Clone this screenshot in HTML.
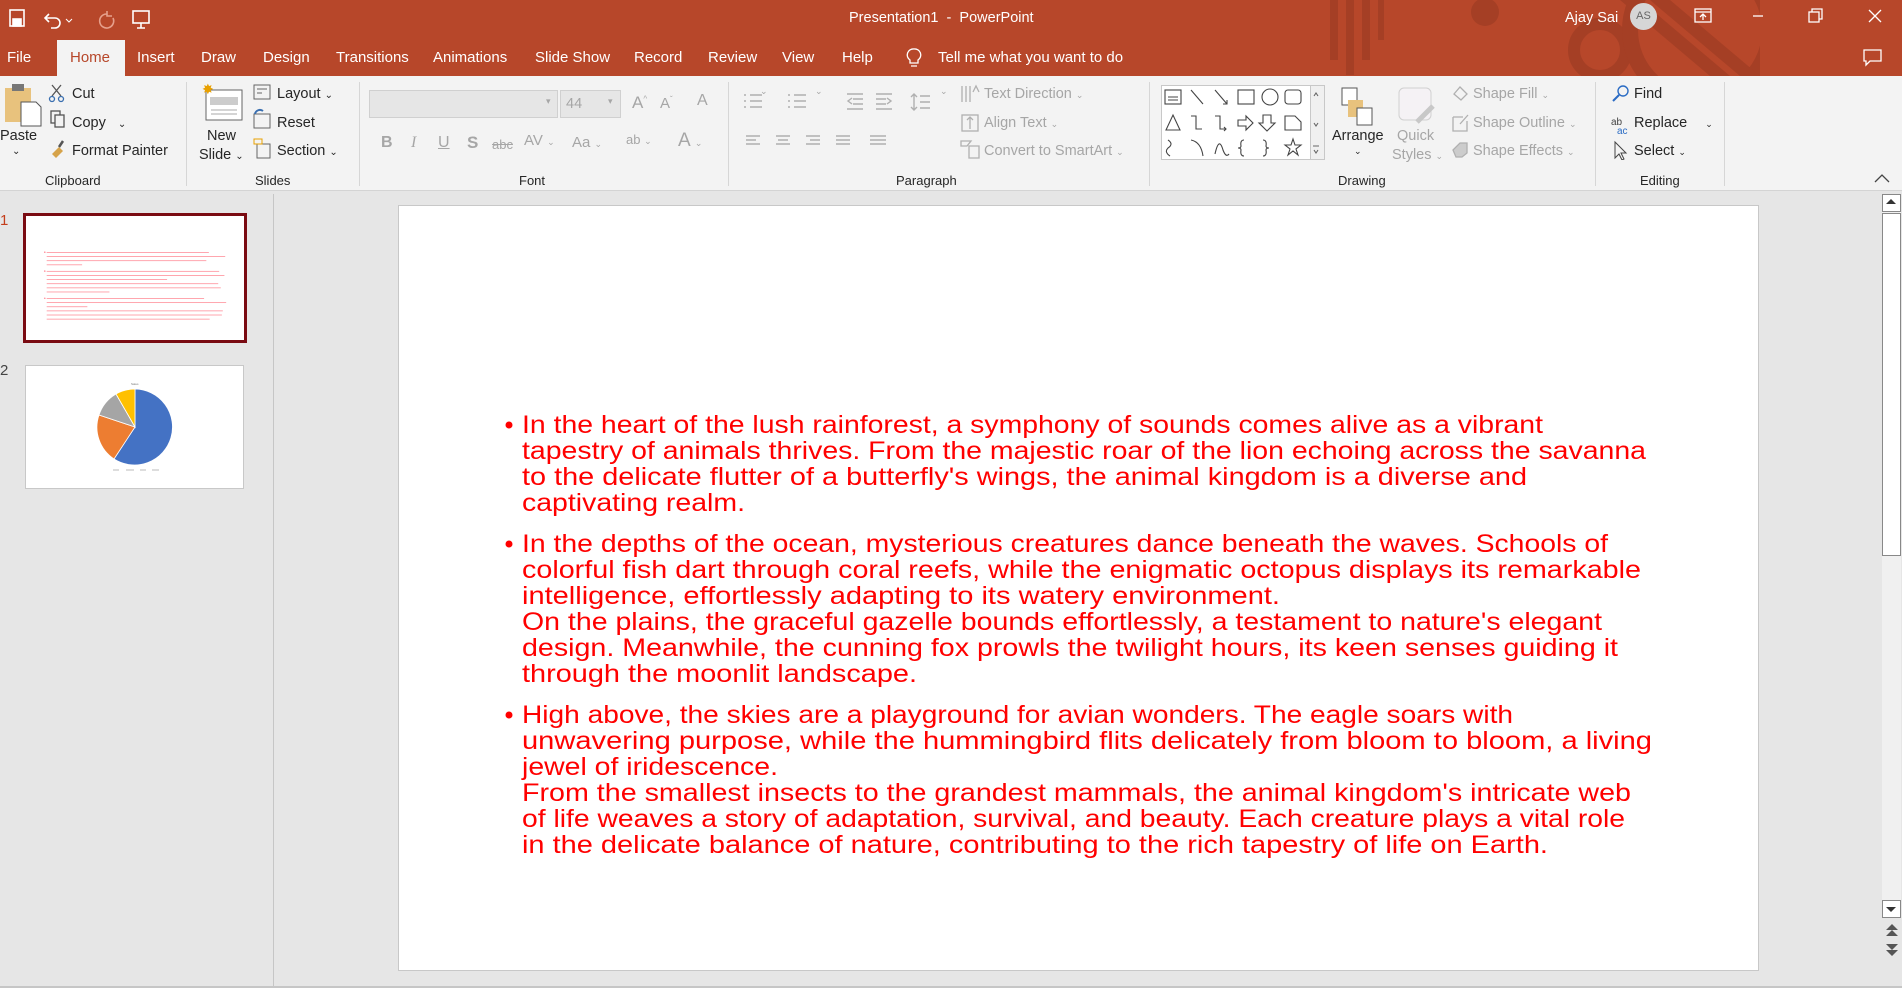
<!DOCTYPE html>
<html><head><meta charset="utf-8">
<style>
*{margin:0;padding:0;box-sizing:border-box}
body{width:1902px;height:988px;overflow:hidden;background:#e6e6e6;font-family:"Liberation Sans",sans-serif;position:relative}
.a{position:absolute;white-space:nowrap}
#title{left:0;top:0;width:1902px;height:76px;background:#b7472a;overflow:hidden}
.w{color:#fff;font-size:15px}
.tab{top:49px;color:#fff;font-size:15px}
#rib{left:0;top:76px;width:1902px;height:115px;background:#f3f3f3;border-bottom:1px solid #d4d4d4}
.t{font-size:14.5px;color:#262626}
.d{font-size:14.5px;color:#a6a6a6}
.lab{top:173px;font-size:13px;color:#262626}
.sep{top:82px;width:1px;height:104px;background:#d6d6d6}
.ic{position:absolute}
</style></head><body>
<div class="a" id="title">
  <svg class="a" style="left:1290px;top:0" width="470" height="76">
    <g fill="#a53f25">
      <rect x="40" y="0" width="8" height="60"/><rect x="56" y="0" width="8" height="75"/><rect x="72" y="0" width="8" height="60"/><rect x="88" y="0" width="6" height="40"/>
      <circle cx="195" cy="12" r="14"/>
      <circle cx="310" cy="50" r="26" fill="none" stroke="#a53f25" stroke-width="12"/>
      <circle cx="410" cy="30" r="70" fill="none" stroke="#a53f25" stroke-width="16"/>
      <path d="M330 0 L420 76 L440 76 L350 0Z"/><path d="M360 0 L450 76 L470 76 L380 0Z"/>
    </g>
  </svg>
  <svg class="a" style="left:9px;top:8px" width="160" height="22" fill="none" stroke="#fff" stroke-width="1.6">
    <rect x="1" y="2" width="14" height="16"/><rect x="4" y="11" width="8" height="7" fill="#fff"/>
    <path d="M40 6 L36 10 L40 14 M36 10 H46 A5 5 0 0 1 46 20 H42"/>
    <path d="M57 11 l3 3 l3 -3" stroke-width="1"/>
    <path d="M98 6 A7 7 0 1 0 104 10 M98 3 V8 H103" stroke="#e6a08c"/>
    <rect x="124" y="3" width="16" height="12"/><path d="M132 15 V20 M128 20 H136"/>
    <path d="M160 12 h6 M161 15 l2 2 l2 -2" stroke-width="1"/>
  </svg>
  <div class="a w" style="left:849px;top:10px;font-size:14.5px">Presentation1&nbsp; - &nbsp;PowerPoint</div>
  <div class="a w" style="left:1565px;top:10px;font-size:14.5px">Ajay Sai</div>
  <div class="a" style="left:1630px;top:3px;width:27px;height:27px;border-radius:50%;background:#d6d6d6;color:#666;font-size:11px;text-align:center;line-height:27px">AS</div>
  <svg class="a" style="left:1692px;top:6px" width="200" height="22" fill="none" stroke="#fff" stroke-width="1.3">
    <rect x="3" y="3" width="16" height="13"/><path d="M3 6 H19 M11 14 V8 M8 11 l3 -3 l3 3"/>
    <path d="M61 10 H71"/>
    <rect x="117" y="6" width="10" height="10"/><path d="M120 6 V3 H130 V13 H127"/>
    <path d="M177 4 L189 16 M189 4 L177 16"/>
  </svg>
  <div class="a tab" style="left:7px">File</div>
  <div class="a" style="left:57px;top:40px;width:68px;height:36px;background:#f3f3f3"></div>
  <div class="a tab" style="left:70px;color:#b7472a">Home</div>
  <div class="a tab" style="left:137px">Insert</div>
  <div class="a tab" style="left:201px">Draw</div>
  <div class="a tab" style="left:263px">Design</div>
  <div class="a tab" style="left:336px">Transitions</div>
  <div class="a tab" style="left:433px">Animations</div>
  <div class="a tab" style="left:535px">Slide Show</div>
  <div class="a tab" style="left:634px">Record</div>
  <div class="a tab" style="left:708px">Review</div>
  <div class="a tab" style="left:782px">View</div>
  <div class="a tab" style="left:842px">Help</div>
  <svg class="a" style="left:904px;top:47px" width="20" height="22" fill="none" stroke="#fff" stroke-width="1.3"><path d="M10 2 A6 6 0 0 1 14 13 V16 H6 V13 A6 6 0 0 1 10 2Z M7 19 H13"/></svg>
  <div class="a tab" style="left:938px">Tell me what you want to do</div>
  <svg class="a" style="left:1862px;top:48px" width="22" height="20" fill="none" stroke="#fff" stroke-width="1.3"><path d="M2 2 H19 V13 H8 L4 17 V13 H2Z"/></svg>
</div>

<div class="a" id="rib">
  <svg class="ic" style="left:3px;top:6px" width="40" height="46"><rect x="2" y="6" width="26" height="34" fill="#e8c27d"/><rect x="9" y="2" width="12" height="7" fill="#777"/><path d="M18 20 H33 L38 25 V44 H18Z" fill="#fff" stroke="#555"/></svg>
  <div class="a t" style="left:0;top:52px">Paste</div>
  <div class="a t" style="left:12px;top:70px;font-size:10px">&#8964;</div>
  <svg class="ic" style="left:48px;top:7px" width="18" height="80" fill="none" stroke="#3a6fb0" stroke-width="1.3"><path d="M4 2 L13 13 M13 2 L4 13" stroke="#555"/><circle cx="4" cy="16" r="2.5"/><circle cx="13" cy="16" r="2.5"/><rect x="3" y="28" width="9" height="12" stroke="#555"/><rect x="7" y="32" width="9" height="12" fill="#f3f3f3" stroke="#555"/><path d="M4 71 L11 64 L15 68 L8 75Z" fill="#d6a34a" stroke="none"/><path d="M11 64 L15 58" stroke="#555" stroke-width="2.5"/></svg>
  <div class="a t" style="left:72px;top:10px">Cut</div>
  <div class="a t" style="left:72px;top:39px">Copy <span style="font-size:10px;margin-left:8px">&#8964;</span></div>
  <div class="a t" style="left:72px;top:67px">Format Painter</div>
  <div class="a lab" style="left:45px;top:97px">Clipboard</div>
  <div class="sep a" style="left:186px;top:6px"></div>
  <svg class="ic" style="left:201px;top:6px" width="44" height="40"><rect x="5" y="8" width="36" height="30" fill="#fff" stroke="#666"/><rect x="9" y="15" width="28" height="8" fill="#ccc"/><path d="M10 28 H36 M10 32 H36" stroke="#aaa"/><text x="1" y="12" font-size="14" fill="#e8a000">✸</text></svg>
  <div class="a t" style="left:207px;top:52px">New</div>
  <div class="a t" style="left:199px;top:71px">Slide <span style="font-size:10px">&#8964;</span></div>
  <svg class="ic" style="left:253px;top:8px" width="20" height="76" fill="none" stroke="#666"><rect x="1" y="1" width="16" height="14"/><path d="M4 5 H14 M4 9 H9"/><rect x="1" y="30" width="16" height="14"/><path d="M2 30 A5 5 0 0 1 10 27" stroke="#3a6fb0" stroke-width="2"/><rect x="4" y="60" width="13" height="14"/><rect x="1" y="55" width="8" height="5" stroke="#e8a000"/></svg>
  <div class="a t" style="left:277px;top:10px">Layout <span style="font-size:10px">&#8964;</span></div>
  <div class="a t" style="left:277px;top:39px">Reset</div>
  <div class="a t" style="left:277px;top:67px">Section <span style="font-size:10px">&#8964;</span></div>
  <div class="a lab" style="left:255px;top:97px">Slides</div>
  <div class="sep a" style="left:359px;top:6px"></div>
  <div class="a" style="left:369px;top:14px;width:189px;height:28px;background:#e6e6e6;border:1px solid #d0d0d0"></div>
  <div class="a" style="left:560px;top:14px;width:61px;height:28px;background:#e6e6e6;border:1px solid #d0d0d0"></div>
  <div class="a d" style="left:566px;top:20px">44</div>
  <div class="a d" style="left:546px;top:20px;font-size:9px">▾</div><div class="a d" style="left:608px;top:20px;font-size:9px">▾</div>
  <div class="a d" style="left:632px;top:17px;font-size:17px">A<sup style="font-size:8px">^</sup></div>
  <div class="a d" style="left:660px;top:19px;font-size:15px">A<sup style="font-size:8px">ˇ</sup></div>
  <div class="a d" style="left:697px;top:16px;font-size:16px">A</div>
  <div class="a d" style="left:381px;top:58px;font-weight:bold;font-size:16px">B</div>
  <div class="a d" style="left:411px;top:58px;font-style:italic;font-size:16px;font-family:'Liberation Serif',serif">I</div>
  <div class="a d" style="left:438px;top:58px;text-decoration:underline;font-size:16px">U</div>
  <div class="a d" style="left:467px;top:57px;font-weight:bold;font-size:17px">S</div>
  <div class="a d" style="left:492px;top:61px;text-decoration:line-through;font-size:13px">abc</div>
  <div class="a d" style="left:524px;top:56px;font-size:15px">AV <span style="font-size:9px">⌄</span></div>
  <div class="a d" style="left:572px;top:58px;font-size:15px">Aa <span style="font-size:9px">⌄</span></div>
  <div class="a d" style="left:626px;top:56px;font-size:13px">ab <span style="font-size:9px">⌄</span></div>
  <div class="a d" style="left:678px;top:54px;font-size:19px">A <span style="font-size:9px">⌄</span></div>
  <div class="a lab" style="left:519px;top:97px">Font</div>
  <div class="sep a" style="left:728px;top:6px"></div>
  <svg class="ic" style="left:740px;top:16px" width="210" height="60" stroke="#b0b0b0" fill="none" stroke-width="1.4">
    <path d="M4 3 h2 M10 3 h12 M4 9 h2 M10 9 h12 M4 15 h2 M10 15 h12"/>
    <path d="M48 3 h2 M54 3 h12 M48 9 h2 M54 9 h12 M48 15 h2 M54 15 h12"/>
    <path d="M107 2 h16 M113 7 h10 M113 12 h10 M107 17 h16 M112 6 l-4 3 l4 3"/>
    <path d="M136 2 h16 M136 7 h10 M136 12 h10 M136 17 h16 M147 6 l4 3 l-4 3"/>
    <path d="M174 2 v16 M171 5 l3 -3 l3 3 M171 15 l3 3 l3 -3 M180 4 h10 M180 10 h10 M180 16 h10"/>
    <path d="M6 44 h14 M6 48 h10 M6 52 h14 M36 44 h14 M38 48 h10 M36 52 h14 M66 44 h14 M70 48 h10 M66 52 h14 M96 44 h14 M96 48 h14 M96 52 h14 M130 44 h16 M130 48 h16 M130 52 h16"/>
  </svg>
  <div class="a d" style="left:760px;top:10px;font-size:9px">⌄</div><div class="a d" style="left:815px;top:10px;font-size:9px">⌄</div><div class="a d" style="left:940px;top:10px;font-size:9px">⌄</div>
  <svg class="ic" style="left:959px;top:8px" width="22" height="76" fill="none" stroke="#b0b0b0" stroke-width="1.3"><path d="M3 2 V18 M7 2 V18 M11 2 V18 M14 8 l3 -6 l3 6"/><rect x="3" y="31" width="16" height="16"/><path d="M11 33 V45 M8 36 l3 -3 l3 3"/><path d="M2 57 H12 L8 62 H2Z M10 62 H20 V74 H10Z"/></svg>
  <div class="a d" style="left:984px;top:10px">Text Direction <span style="font-size:9px">⌄</span></div>
  <div class="a d" style="left:984px;top:39px">Align Text <span style="font-size:9px">⌄</span></div>
  <div class="a d" style="left:984px;top:67px">Convert to SmartArt <span style="font-size:9px">⌄</span></div>
  <div class="a lab" style="left:896px;top:97px">Paragraph</div>
  <div class="sep a" style="left:1149px;top:6px"></div>
  <div class="a" style="left:1161px;top:9px;width:164px;height:75px;background:#fff;border:1px solid #c8c8c8"></div>
  <div class="a" style="left:1310px;top:9px;width:15px;height:75px;background:#f0f0f0;border:1px solid #c8c8c8"></div>
  <svg class="ic" style="left:1163px;top:12px" width="160" height="70" fill="none" stroke="#444" stroke-width="1.1">
    <rect x="2" y="2" width="16" height="14"/><path d="M5 9 h10 M5 12 h10"/>
    <path d="M28 2 L40 16 M52 2 L64 16 M60 16 h4 v-4"/><rect x="75" y="2" width="16" height="14"/><circle cx="107" cy="9" r="8"/><rect x="122" y="2" width="16" height="14" rx="3"/>
    <path d="M3 42 L10 27 L17 42Z M28 28 h5 v13 h6 M52 28 h5 v13 h6 M61 39 l2 2 l-2 2 M75 32 h8 v-4 l7 7 l-7 7 v-4 h-8Z M100 27 h8 v8 h4 l-8 8 l-8 -8 h4Z M122 42 V28 h10 l6 6 v8Z"/>
    <path d="M5 52 q6 4 0 8 q-4 4 2 8 M28 52 q10 2 12 16 M52 66 q4 -18 8 -4 q3 8 6 4 M81 52 q-4 0 -3 6 q0 2 -3 2 q3 0 3 2 q-1 6 3 6 M100 52 q4 0 3 6 q0 2 3 2 q-3 0 -3 2 q1 6 -3 6 M130 51 l2 6 h6 l-5 4 l2 6 l-5 -4 l-5 4 l2 -6 l-5 -4 h6Z"/>
    <path d="M151 8 l2 -3 l2 3 M151 35 l2 3 l2 -3 M150 58 h6 M151 62 l2 3 l2 -3" stroke="#666"/>
  </svg>
  <svg class="ic" style="left:1340px;top:10px" width="36" height="40"><rect x="2" y="2" width="15" height="17" fill="#fff" stroke="#555"/><rect x="8" y="14" width="15" height="17" fill="#e8c27d"/><rect x="17" y="22" width="15" height="17" fill="#fff" stroke="#555"/></svg>
  <div class="a t" style="left:1332px;top:52px">Arrange</div>
  <div class="a t" style="left:1354px;top:70px;font-size:9px">⌄</div>
  <svg class="ic" style="left:1397px;top:10px" width="40" height="44"><rect x="2" y="2" width="32" height="32" rx="5" fill="#f5f2f5" stroke="#d0d0d0"/><path d="M20 36 L36 20" stroke="#c8c8c8" stroke-width="5"/></svg>
  <div class="a d" style="left:1397px;top:52px">Quick</div>
  <div class="a d" style="left:1392px;top:71px">Styles <span style="font-size:9px">⌄</span></div>
  <svg class="ic" style="left:1450px;top:8px" width="20" height="76" fill="none" stroke="#b0b0b0" stroke-width="1.3"><path d="M4 10 l6 -7 l7 7 l-6 6Z"/><path d="M3 33 h10 M3 33 v14 h14 v-10 M10 40 l8 -9"/><path d="M3 66 l7 -7 h7 v10 l-5 4 h-6Z" fill="#ccc"/></svg>
  <div class="a d" style="left:1473px;top:10px">Shape Fill <span style="font-size:9px">⌄</span></div>
  <div class="a d" style="left:1473px;top:39px">Shape Outline <span style="font-size:9px">⌄</span></div>
  <div class="a d" style="left:1473px;top:67px">Shape Effects <span style="font-size:9px">⌄</span></div>
  <div class="a lab" style="left:1338px;top:97px">Drawing</div>
  <div class="sep a" style="left:1595px;top:6px"></div>
  <svg class="ic" style="left:1610px;top:8px" width="22" height="76" fill="none" stroke-width="1.4"><circle cx="13" cy="7" r="5" stroke="#2b6cc4"/><path d="M9 11 L3 17" stroke="#2b6cc4" stroke-width="2"/><text x="1" y="41" font-size="10" fill="#444" stroke="none">ab</text><text x="7" y="50" font-size="10" fill="#2b6cc4" stroke="none">ac</text><path d="M5 58 V74 l4 -4 l3 6 l2 -1 l-3 -6 h5Z" stroke="#444" stroke-width="1"/></svg>
  <div class="a t" style="left:1634px;top:10px">Find</div>
  <div class="a t" style="left:1634px;top:39px">Replace <span style="font-size:9px;margin-left:14px">⌄</span></div>
  <div class="a t" style="left:1634px;top:67px">Select <span style="font-size:9px">⌄</span></div>
  <div class="a lab" style="left:1640px;top:97px">Editing</div>
  <div class="sep a" style="left:1724px;top:6px"></div>
  <svg class="ic" style="left:1872px;top:96px" width="20" height="12" fill="none" stroke="#444" stroke-width="1.3"><path d="M3 10 L10 3 L17 10"/></svg>
</div>

<div class="a" style="left:273px;top:194px;width:1px;height:794px;background:#c6c6c6"></div>
<div class="a" style="left:0;top:212px;color:#c43e1c;font-size:15px">1</div>
<div class="a" style="left:0;top:362px;color:#444;font-size:15px">2</div>
<div class="a" style="left:23px;top:213px;width:224px;height:130px;border:3px solid #7a0b12;background:#fff"></div>
<svg class="a" style="left:27px;top:217px" width="216" height="122" viewBox="0 0 1360 765">
  <g fill="#ff6070" opacity="0.7">
  <circle cx="112" cy="220" r="5"/><circle cx="112" cy="339" r="5"/><circle cx="112" cy="510" r="5"/>
  <rect x="124" y="219" width="1021" height="5"/><rect x="124" y="245" width="1124" height="5"/><rect x="124" y="271" width="1005" height="5"/><rect x="124" y="297" width="223" height="5"/>
  <rect x="124" y="338" width="1086" height="5"/><rect x="124" y="364" width="1119" height="5"/><rect x="124" y="390" width="758" height="5"/><rect x="124" y="416" width="1080" height="5"/><rect x="124" y="442" width="1096" height="5"/><rect x="124" y="468" width="395" height="5"/>
  <rect x="124" y="509" width="991" height="5"/><rect x="124" y="535" width="1130" height="5"/><rect x="124" y="561" width="256" height="5"/><rect x="124" y="587" width="1109" height="5"/><rect x="124" y="613" width="1103" height="5"/><rect x="124" y="639" width="1026" height="5"/>
  </g>
</svg>
<div class="a" style="left:25px;top:365px;width:219px;height:124px;border:1px solid #c8c8c8;background:#fff"></div>
<svg class="a" style="left:25px;top:365px" width="219" height="124">
  <text x="106" y="20" font-size="3" fill="#777">Sales</text>
  <g stroke="#fff" stroke-width="0.8">
  <path d="M110 62 L110 24 A38 38 0 1 1 89 94Z" fill="#4472c4"/>
  <path d="M110 62 L89 94 A38 38 0 0 1 74 50Z" fill="#ed7d31"/>
  <path d="M110 62 L74 50 A38 38 0 0 1 91 29Z" fill="#a5a5a5"/>
  <path d="M110 62 L91 29 A38 38 0 0 1 110 24Z" fill="#ffc000"/>
  </g>
  <path d="M88 105 h6 M101 105 h8 M115 105 h6 M127 105 h7" stroke="#bbb" stroke-width="1"/>
</svg>

<div class="a" style="left:398px;top:205px;width:1361px;height:766px;background:#fff;border:1px solid #c8c8c8"></div>
<svg class="a" style="left:398px;top:205px" width="1360" height="765">
  <g fill="#ff0000" font-family="Liberation Sans,sans-serif" font-size="25">
  <circle cx="111" cy="220" r="3.5"/><circle cx="111" cy="339" r="3.5"/><circle cx="111" cy="510" r="3.5"/>
  <text x="124" y="228" textLength="1021" lengthAdjust="spacingAndGlyphs">In the heart of the lush rainforest, a symphony of sounds comes alive as a vibrant</text>
  <text x="124" y="254" textLength="1124" lengthAdjust="spacingAndGlyphs">tapestry of animals thrives. From the majestic roar of the lion echoing across the savanna</text>
  <text x="124" y="280" textLength="1005" lengthAdjust="spacingAndGlyphs">to the delicate flutter of a butterfly's wings, the animal kingdom is a diverse and</text>
  <text x="124" y="306" textLength="223" lengthAdjust="spacingAndGlyphs">captivating realm.</text>
  <text x="124" y="347" textLength="1086" lengthAdjust="spacingAndGlyphs">In the depths of the ocean, mysterious creatures dance beneath the waves. Schools of</text>
  <text x="124" y="373" textLength="1119" lengthAdjust="spacingAndGlyphs">colorful fish dart through coral reefs, while the enigmatic octopus displays its remarkable</text>
  <text x="124" y="399" textLength="758" lengthAdjust="spacingAndGlyphs">intelligence, effortlessly adapting to its watery environment.</text>
  <text x="124" y="425" textLength="1080" lengthAdjust="spacingAndGlyphs">On the plains, the graceful gazelle bounds effortlessly, a testament to nature's elegant</text>
  <text x="124" y="451" textLength="1096" lengthAdjust="spacingAndGlyphs">design. Meanwhile, the cunning fox prowls the twilight hours, its keen senses guiding it</text>
  <text x="124" y="477" textLength="395" lengthAdjust="spacingAndGlyphs">through the moonlit landscape.</text>
  <text x="124" y="518" textLength="991" lengthAdjust="spacingAndGlyphs">High above, the skies are a playground for avian wonders. The eagle soars with</text>
  <text x="124" y="544" textLength="1130" lengthAdjust="spacingAndGlyphs">unwavering purpose, while the hummingbird flits delicately from bloom to bloom, a living</text>
  <text x="124" y="570" textLength="256" lengthAdjust="spacingAndGlyphs">jewel of iridescence.</text>
  <text x="124" y="596" textLength="1109" lengthAdjust="spacingAndGlyphs">From the smallest insects to the grandest mammals, the animal kingdom's intricate web</text>
  <text x="124" y="622" textLength="1103" lengthAdjust="spacingAndGlyphs">of life weaves a story of adaptation, survival, and beauty. Each creature plays a vital role</text>
  <text x="124" y="648" textLength="1026" lengthAdjust="spacingAndGlyphs">in the delicate balance of nature, contributing to the rich tapestry of life on Earth.</text>
  </g>
</svg>

<div class="a" style="left:1882px;top:194px;width:19px;height:724px;background:#f0f0f0"></div>
<div class="a" style="left:1882px;top:194px;width:19px;height:18px;background:#fff;border:1px solid #888"></div>
<div class="a" style="left:1886px;top:199px;width:0;height:0;border-left:5px solid transparent;border-right:5px solid transparent;border-bottom:5px solid #333"></div>
<div class="a" style="left:1882px;top:213px;width:19px;height:343px;background:#fff;border:1px solid #888"></div>
<div class="a" style="left:1882px;top:900px;width:19px;height:18px;background:#fff;border:1px solid #888"></div>
<div class="a" style="left:1886px;top:907px;width:0;height:0;border-left:5px solid transparent;border-right:5px solid transparent;border-top:5px solid #333"></div>
<svg class="a" style="left:1883px;top:922px" width="18" height="38" fill="#555"><path d="M9 2 L15 8 H3Z M9 8 L15 14 H3Z M3 22 H15 L9 28Z M3 28 H15 L9 34Z"/></svg>
<div class="a" style="left:0;top:986px;width:1902px;height:2px;background:#c6c6c6"></div>
</body></html>
